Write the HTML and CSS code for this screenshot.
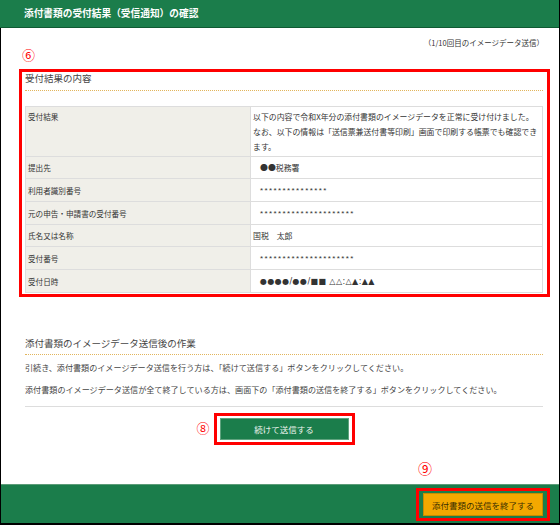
FILE: index.html
```html
<!DOCTYPE html>
<html lang="ja">
<head>
<meta charset="utf-8">
<title>添付書類の受付結果（受信通知）の確認</title>
<link rel="stylesheet" href="styles.css">
</head>
<body>
<div class="page">
  <header class="titlebar">添付書類の受付結果（受信通知）の確認</header>
  <main class="content">
    <p class="count">（1/10回目のイメージデータ送信）</p>
    <div class="mark-row"><span class="mark">⑥</span></div>
    <section class="result">
      <h2 class="sec-title">受付結果の内容</h2>
      <table class="info">
        <tr class="tall">
          <th>受付結果</th>
          <td>以下の内容で令和X年分の添付書類のイメージデータを正常に受け付けました。<br>なお、以下の情報は「送信票兼送付書等印刷」画面で印刷する帳票でも確認できます。</td>
        </tr>
        <tr><th>提出先</th><td><span class="ind">●●税務署</span></td></tr>
        <tr><th>利用者識別番号</th><td><span class="ind stars">***************</span></td></tr>
        <tr><th>元の申告・申請書の受付番号</th><td><span class="ind stars">*********************</span></td></tr>
        <tr><th>氏名又は名称</th><td>国税　太郎</td></tr>
        <tr><th>受付番号</th><td><span class="ind stars">*********************</span></td></tr>
        <tr><th>受付日時</th><td><span class="ind sym">●●●●/●●/■■ △△:△▲:▲▲</span></td></tr>
      </table>
    </section>
    <section class="after">
      <h2 class="sec-title">添付書類のイメージデータ送信後の作業</h2>
      <p>引続き、添付書類のイメージデータ送信を行う方は、「続けて送信する」ボタンをクリックしてください。</p>
      <p>添付書類のイメージデータ送信が全て終了している方は、画面下の「添付書類の送信を終了する」ボタンをクリックしてください。</p>
    </section>
    <div class="continue-row">
      <div class="annot">
        <span class="mark mark-left">⑧</span>
        <button class="btn-green" type="button">続けて送信する</button>
      </div>
    </div>
    <div class="end-mark-row"><span class="mark">⑨</span></div>
  </main>
  <footer class="footbar">
    <div class="annot">
      <button class="btn-orange" type="button">添付書類の送信を終了する</button>
    </div>
  </footer>
</div>
</body>
</html>
```
FILE: styles.css
```css
* { box-sizing: border-box; }
html, body { margin: 0; padding: 0; background: #fff; }
body {
  font-family: "Noto Sans CJK JP", "Noto Sans", sans-serif;
  color: #333;
}
.page {
  width: 560px;
  height: 525px;
  display: flex;
  flex-direction: column;
  border-left: 1px solid #000;
  border-right: 1px solid #000;
  border-bottom: 2px solid #000;
}
.titlebar {
  height: 28px;
  background: #1b7d4b;
  border-bottom: 1px solid #0f5a33;
  color: #fff;
  font-weight: bold;
  font-size: 9.7px;
  line-height: 27px;
  padding-left: 24px;
  margin-left: -1px;
}
.content {
  flex: 1;
  display: flex;
  flex-direction: column;
}
.count {
  margin: 0;
  padding: 10px 15px 0 0;
  text-align: right;
  font-size: 7.5px;
  line-height: 10px;
  color: #333;
}
.mark-row {
  display: flex;
  align-items: flex-start;
  height: 21px;
  padding: 0 0 0 21px;
}
.mark {
  display: inline-block;
  color: #f00;
  font-size: 13px;
  line-height: 13px;
  font-family: "Noto Sans CJK JP", sans-serif;
}
.result {
  margin: 0 9px 0 18px;
  border: 3px solid #f00;
  padding: 0 4px 1px 3px;
}
.sec-title {
  margin: 0;
  font-weight: normal;
  font-size: 9.5px;
  line-height: 12px;
  color: #444;
  padding-bottom: 6px;
  border-bottom: 1px dotted #e2b55c;
}
.info {
  width: 100%;
  margin-top: 15px;
  border-collapse: collapse;
  font-size: 7.9px;
  color: #333;
}
.info th, .info td {
  border: 1px solid #ddd;
  text-align: left;
  vertical-align: middle;
  font-weight: normal;
  line-height: 11px;
  padding: 5px 3px;
}
.info th {
  width: 225px;
  background: #f0efe9;
  padding-left: 2px;
  font-size: 7.6px;
}
.info td { background: #fff; padding-left: 2px; }
.info tr.tall th, .info tr.tall td {
  vertical-align: top;
  line-height: 15px;
  padding-top: 2px;
  padding-bottom: 2px;
}
.ind { padding-left: 7px; }
.stars { letter-spacing: 1.4px; font-family: "Liberation Sans", sans-serif; font-size: 8px; }
.sym { font-family: "DejaVu Sans", sans-serif; font-size: 8px; letter-spacing: 0.4px; }
.after {
  margin: 40px 16px 0 24px;
  border-bottom: 1px solid #ddd;
  padding-bottom: 10px;
}
.after .sec-title { padding-bottom: 5px; }
.after p {
  margin: 7px 0 0;
  font-size: 8.1px;
  line-height: 12px;
  color: #444;
}
.after p + p { margin-top: 10px; }
.continue-row {
  display: flex;
  justify-content: center;
  margin-top: 6px;
  padding-left: 8px;
}
.annot {
  position: relative;
  border: 3px solid #f00;
  padding: 2px 3px;
  background: #fff;
}
.mark-left {
  position: absolute;
  right: 100%;
  margin-right: 7px;
  top: 5px;
}
.btn-green {
  display: block;
  width: 129px;
  height: 22px;
  background: #1b7d4b;
  border: 1px solid #5fa37e;
  color: #eef5ef;
  font-family: inherit;
  font-size: 8.5px;
  padding: 0;
}
.end-mark-row {
  margin-top: auto;
  padding: 0 0 5px 417px;
}
.end-mark-row .mark { font-size: 14px; line-height: 15px; }
.footbar {
  height: 39px;
  background: #1b7d4b;
  border-top: 1px solid #5c9c78;
  display: flex;
  justify-content: flex-end;
  padding: 3px 9px 0 0;
}
.footbar .annot {
  background: transparent;
  padding: 2px 4px;
  height: 33px;
}
.btn-orange {
  display: block;
  width: 120px;
  height: 23px;
  background: #f3a800;
  border: 1px solid #c98c00;
  color: #3b2f00;
  font-family: inherit;
  font-size: 8.5px;
  padding: 0;
}
```
